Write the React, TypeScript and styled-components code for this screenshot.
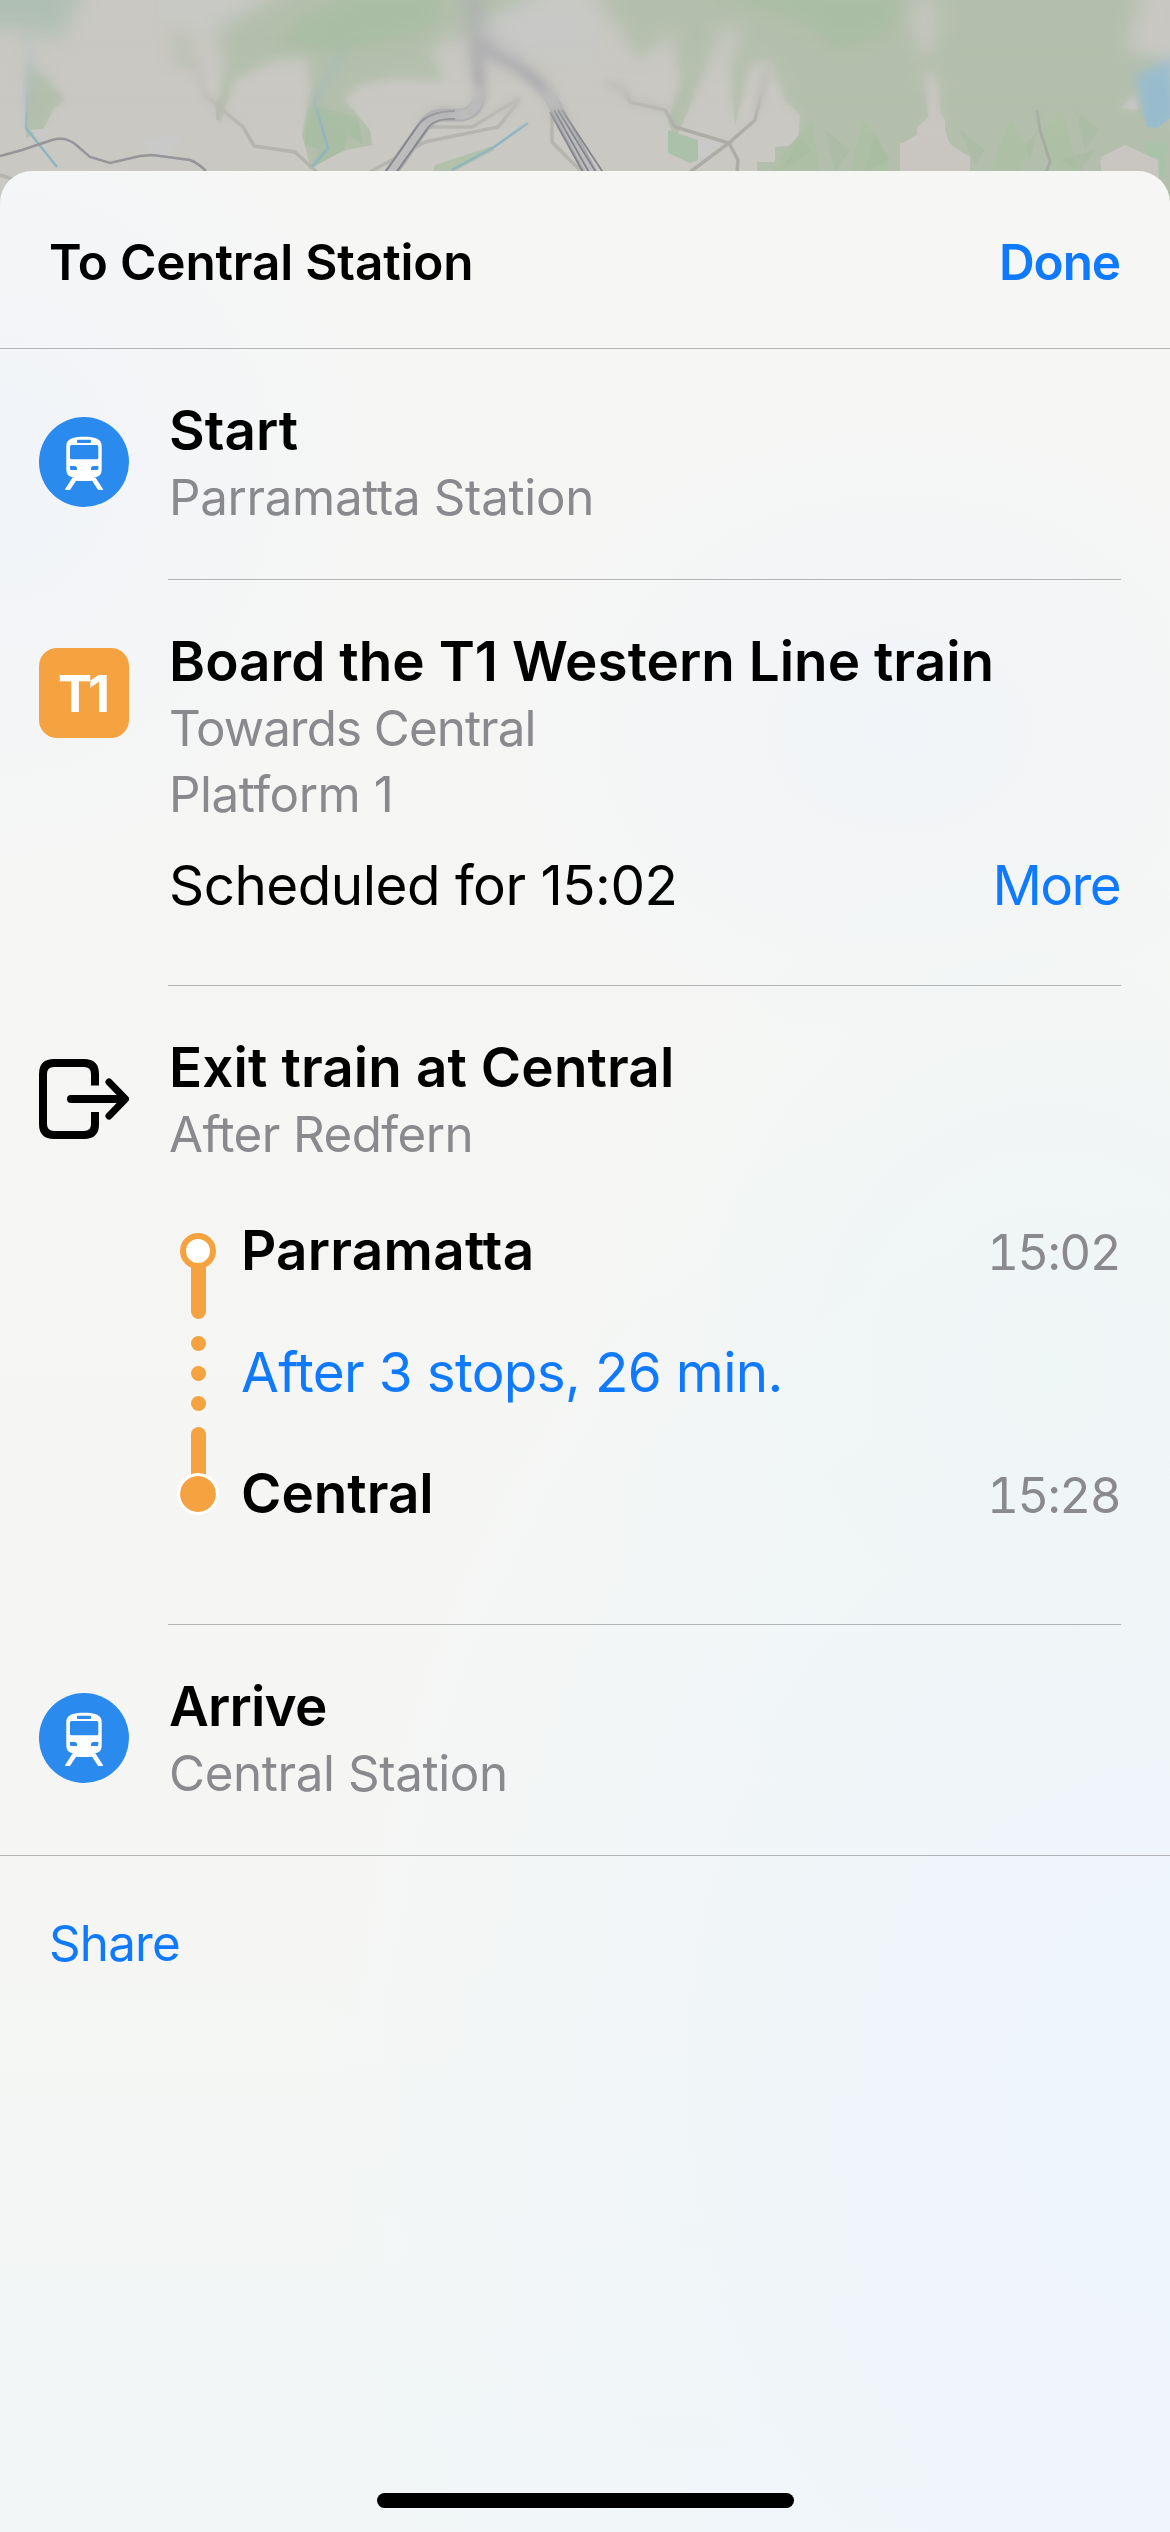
import React from "react";
import styled, { createGlobalStyle, css } from "styled-components";

const Global = createGlobalStyle`
  *, *::before, *::after { box-sizing: border-box; }
  html, body { margin: 0; padding: 0; background: #c9c8c2; }
  body { font-family: Inter, "Liberation Sans", sans-serif; color: #000; }
`;

const Screen = styled.main`
  width: 1170px;
  height: 2532px;
  overflow: hidden;
  display: flex;
  flex-direction: column;
  background: #c9c8c2;
`;

const MapStrip = styled.svg`
  display: block;
  width: 1170px;
  height: 201px;
  flex: none;
`;

const Sheet = styled.section`
  flex: 1;
  margin-top: -30px;
  position: relative;
  display: flex;
  flex-direction: column;
  border-radius: 32px 32px 0 0;
  overflow: hidden;
  background:
    radial-gradient(ellipse 380px 420px at 0px 300px, #f1f4f9 0%, rgba(241, 244, 249, 0) 100%),
    radial-gradient(ellipse 420px 330px at 900px 560px, #f1f4f8 0%, rgba(241, 244, 248, 0) 100%),
    radial-gradient(ellipse 460px 520px at 1050px 1200px, #eff6f6 0%, rgba(239, 246, 246, 0) 100%),
    radial-gradient(ellipse 850px 1050px at 1170px 1900px, #edf5fd 0%, rgba(237, 245, 253, 0) 100%),
    linear-gradient(180deg, #f6f6f5 0%, #f5f6f4 75%, #f2f6f7 100%);
`;

const textKinds = {
  nav: css`font-size: 49.5px; font-weight: 600; line-height: 66px;`,
  title: css`font-size: 54.8px; font-weight: 600; line-height: 67px;`,
  body: css`font-size: 54.8px; font-weight: 400; line-height: 66px;`,
  sub: css`font-size: 49.3px; font-weight: 400; line-height: 66px;`,
};

const Label = styled.span<{ $kind: keyof typeof textKinds; $tone?: string; $track?: number }>`
  display: block;
  margin: 0;
  white-space: nowrap;
  ${(p) => textKinds[p.$kind]}
  color: ${(p) => p.$tone ?? "#000"};
  letter-spacing: ${(p) => p.$track ?? 0}px;
`;

const Time = styled(Label)`
  font-variant-numeric: tabular-nums;
`;

const Link = styled.button<{ $kind: keyof typeof textKinds; $track?: number }>`
  appearance: none;
  border: 0;
  padding: 0;
  background: none;
  font-family: inherit;
  text-align: left;
  white-space: nowrap;
  ${(p) => textKinds[p.$kind]}
  color: #0f7afe;
  letter-spacing: ${(p) => p.$track ?? 0}px;
`;

const Header = styled.header`
  flex: none;
  height: 178px;
  padding: 5px 50px 0 49px;
  display: flex;
  align-items: center;
  justify-content: space-between;
  border-bottom: 1px solid #b2b4b6;
`;

const Step = styled.article<{ $height: number; $full?: boolean }>`
  flex: none;
  height: ${(p) => p.$height}px;
  display: grid;
  grid-template-columns: 129px 1fr;
  column-gap: 39px;
  border-bottom: ${(p) => (p.$full ? "1px solid #b2b4b6" : "0")};
`;

const IconSlot = styled.div<{ $top?: number }>`
  padding-top: ${(p) => p.$top ?? 68}px;
  padding-left: 39px;
  svg { display: block; }
`;

const StepBody = styled.div<{ $line?: boolean }>`
  margin-right: 49px;
  padding: 48px 1px 0;
  border-bottom: ${(p) => (p.$line ? "1px solid #b2b4b6" : "0")};
`;

const LineBadge = styled.div`
  width: 90px;
  height: 90px;
  border-radius: 18px;
  background: #f5a340;
  color: #fff;
  display: flex;
  align-items: center;
  justify-content: center;
  font-size: 51px;
  font-weight: 700;
  letter-spacing: -4px;
  padding-right: 4px;
`;

const Schedule = styled.div`
  margin-top: 25px;
  display: flex;
  justify-content: space-between;
`;

const Journey = styled.div`
  margin-top: 23px;
  padding-left: 8px;
  display: grid;
  grid-template-columns: 42px 1fr;
  column-gap: 22px;
`;

const Track = styled.div`
  display: flex;
  flex-direction: column;
  align-items: center;
  padding-top: 43px;
`;

const Origin = styled.i`
  width: 36px;
  height: 36px;
  border-radius: 50%;
  border: 6px solid #f5a340;
  background: #fff;
`;

const Stem = styled.i<{ $end?: boolean }>`
  width: 15px;
  height: ${(p) => (p.$end ? 49 : 53)}px;
  margin-top: ${(p) => (p.$end ? 0 : -3)}px;
  background: #f5a340;
  border-radius: ${(p) => (p.$end ? "8px 8px 0 0" : "0 0 8px 8px")};
`;

const Dots = styled.div`
  display: flex;
  flex-direction: column;
  gap: 15px;
  padding: 17px 0 16px;
`;

const Dot = styled.i`
  width: 15px;
  height: 15px;
  border-radius: 50%;
  background: #f5a340;
`;

const Destination = styled.i`
  width: 42px;
  height: 42px;
  margin-top: -3px;
  border-radius: 50%;
  border: 3px solid #fff;
  background: #f5a340;
  background-clip: padding-box;
`;

const Stops = styled.div`
  display: grid;
  grid-auto-rows: 121.5px;
  align-items: center;
`;

const Stop = styled.div`
  display: flex;
  justify-content: space-between;
  align-items: baseline;
`;

const Footer = styled.footer`
  flex: 1;
  padding: 54px 49px 0;
  display: flex;
  flex-direction: column;
  align-items: flex-start;
`;

const HomeBar = styled.div`
  width: 417px;
  height: 15px;
  margin: auto auto 24px;
  border-radius: 8px;
  background: #000;
`;

const GREY = "#8a8a8e";

function TrainIcon() {
  return (
    <svg width="90" height="90" viewBox="0 0 90 90">
      <circle cx="45" cy="45" r="45" fill="#2b8aee" />
      <path
        fill="#fff"
        fillRule="evenodd"
        d="M45 19.7c6 0 10.500.6 13.200 2.100C61.500 23.400 62.700 26 62.700 29v23.500c0 4-1.700 6.500-5.200 7.600-1.200.4-2.600.6-3.500.8-.8 2.300-1.400 3.100-3 3.100H39c-1.600 0-2.200-.8-3-3.100-.9-.2-2.300-.4-3.500-.8-3.500-1.100-5.200-3.600-5.200-7.600V29c0-3 1.200-5.600 4.500-7.200C34.500 20.300 39 19.700 45 19.700ZM39 22.700q-1 0-1 1V25q0 1 1 1h12q1 0 1-1v-1.300q0-1-1-1ZM32.500 28q-1.500 0-1.500 1.500v11.300q0 1.500 1.500 1.500h25.300q1.500 0 1.500-1.500V29.500q0-1.500-1.500-1.500ZM31 49v2.800q0 1.200 1.200 1.200H38v-1.500q0-2.500-2.500-2.500ZM59.300 49v2.800q0 1.200-1.200 1.200H52v-1.500q0-2.500 2.500-2.500Z"
      />
      <path fill="#fff" d="M33.500 60.500h5.800L31 73h-5q.2-1 .8-2ZM51 60.500h5.500l6.800 10.500q.6 1 .8 2h-5Z" />
    </svg>
  );
}

function ExitIcon() {
  return (
    <svg width="90" height="80" viewBox="0 0 90 80" fill="none" stroke="#000">
      <path strokeWidth="8" d="M56 26.500V15Q56 4 45 4H15Q4 4 4 15V65Q4 76 15 76H45Q56 76 56 65V53" />
      <path strokeWidth="8" strokeLinecap="round" d="M32 40H84" />
      <path strokeWidth="7" strokeLinecap="round" strokeLinejoin="round" d="M70 23 86.500 40 70 57" />
    </svg>
  );
}

function MapArt() {
  return (
    <g fill="none">
      <rect x="-30" y="-40" width="1230" height="280" fill="#c9c8c2" />
      <path fill="#c8c8c6" d="M160 0h120l-60 30-60-10ZM470 0h120v60h-90Z" />
      <g fill="#b3bfac">
        <path d="M-20-20H90L60 40 30 30H-20Z" fill="#b0bfb4" />
        <path d="M28 60 50 80 65 100 54 108 43 130 26 138Z" />
        <path d="M170 30 190 32 196 68 176 70Z" fill="#bcc1b2" />
        <path d="M300-20H560L470 30 430 50 445 80 400 78 360 85 345 100 370 130 372 145 347 150 310 165 302 135 310 90 306 55 270 62 235 80 220 124 218 105 224 60 215 30Z" />
        <path d="M585-20H1140V10L1125 50 1170 60V200H1110L1110 165 1125 145 1100 160 1102 175H972L965 155 945 140 945 120 935 105 925 130 900 145 900 175H757V162H775V147L798 145 800 115 785 100 770 60 750 65 735 125 730 70 740 25 722 30 695 95 675 140 668 122 680 80 672 30 640 60 620 30Z" />
      </g>
      <g fill="#a9bda4">
        <path d="M360-10H450L430 30 350 50 270 52 300 20Z" />
        <path d="M690-10H900L895 30 840 50 800 20Z" />
        <path d="M305 128 310 105 330 110 358 118 363 145 347 134 344 150 308 170 320 150 305 145Z" />
      </g>
      <g fill="#adc0a5">
        <path d="M668 130 698 140V160L690 163 668 153Z" fill="#abc1aa" />
        <path d="M790 145 812 120 820 171H772ZM850 171 862 120 880 140 890 171ZM990 171 1010 120 1030 150 1020 171ZM1042 130 1062 110 1078 171H1052Z" />
        <path d="M1145 143h22l-2 35-18-3Z" fill="#a9c2aa" />
        <path d="M433 171 435 165 465 155 492 146 494 150 470 163 455 171Z" fill="#b2c1a9" />
      </g>
      <g fill="#a4b79c" opacity=".35">
        <path d="M780 171 800 140 812 150ZM825 130 850 150 835 171ZM865 171 875 135 890 160ZM960 130 985 150 975 165ZM1025 145 1038 130 1030 160ZM1075 110 1100 130 1085 150ZM1060 160 1095 150 1080 171Z" />
      </g>
      <path fill="#c9c6c1" d="M900 171V143L917 142V128L935 110 945 130 950 145 970 157V171ZM912 0h24l-2 50-16 5ZM925 70 937 75 942 125 928 115ZM1150 0h30v45l-25-10Z" />
      <path fill="#c9c6c1" d="M1101 157 1125 145 1158 160 1160 200H1120L1101 171Z" />
      <path fill="#c9c9ca" d="M140 140 183 135 160 165ZM698 140 722 142 700 160ZM30 130 50 128 42 140ZM1120 108 1135 95 1138 110Z" />
      <path fill="#98bccd" d="M1135 75 1150 70 1175 55V115L1157 128 1147 127Z" />
      <g stroke="#b5b4ae" strokeWidth="3.500">
        <path d="M195 60 205 95 243 127 254 146 295 152 320 175M217 100 218 120" />
        <path d="M370 172 425 142 498 127 520 100M420 127H472L520 98M552 85V142L585 175" />
        <path d="M605 82 625 90 630 102 665 110 675 127 729 143 690 172M767 70 755 120 729 143 738 160 737 172" stroke="#adaca8" />
        <path d="M1037 110 1040 130 1050 162 1046 172" stroke="#a5aca1" strokeWidth="3" />
        <path d="M0 175 15 180" />
      </g>
      <g stroke="#8fb5c2" strokeWidth="2.500">
        <path d="M30 30 26 128 57 167M345 50 330 75 314 100 328 148 312 167M452 170 494 147 528 123" />
      </g>
      <path stroke="#95959a" strokeWidth="2.500" d="M0 156 22 150 52 140Q65 136 75 144L90 157 110 163 140 156 152 155 190 160Q198 163 206 171" />
      <g stroke="#a9a9ad" strokeWidth="13" strokeLinejoin="round">
        <path d="M474-10 475 35 480 90Q480 112 462 115H441Q430 116 423 127L390 174M475 35Q485 50 510 62 548 85 558 112L592 175" />
      </g>
      <g stroke="#c4c4c3" strokeWidth="9" strokeLinejoin="round">
        <path d="M479 85Q480 112 462 115H441Q430 116 423 127L390 174M545 88 558 112 592 175" strokeOpacity=".7" />
      </g>
      <g stroke="#85868d" strokeWidth="1.800">
        <path d="M455 111Q430 111 419 124L384 174M455 119Q434 118 427 129L395 174" />
        <path d="M550 112 584 174M554 110 590 174M558 110 597 174M562 110 604 174" />
      </g>
    </g>
  );
}

export default function App() {
  return (
    <Screen>
      <Global />
      <MapStrip viewBox="0 0 1170 201" aria-hidden="true">
        <defs>
          <filter id="far" x="-5%" y="-30%" width="110%" height="160%"><feGaussianBlur stdDeviation="10" /></filter>
          <filter id="mid" x="-5%" y="-30%" width="110%" height="160%"><feGaussianBlur stdDeviation="4" /></filter>
          <linearGradient id="fadeMid" x1="0" y1="35" x2="0" y2="95" gradientUnits="userSpaceOnUse">
            <stop offset="0" stopColor="#000" /><stop offset="1" stopColor="#fff" />
          </linearGradient>
          <linearGradient id="fadeNear" x1="0" y1="92" x2="0" y2="132" gradientUnits="userSpaceOnUse">
            <stop offset="0" stopColor="#000" /><stop offset="1" stopColor="#fff" />
          </linearGradient>
          <mask id="maskMid" maskUnits="userSpaceOnUse" x="0" y="0" width="1170" height="201"><rect width="1170" height="201" fill="url(#fadeMid)" /></mask>
          <mask id="maskNear" maskUnits="userSpaceOnUse" x="0" y="0" width="1170" height="201"><rect width="1170" height="201" fill="url(#fadeNear)" /></mask>
        </defs>
        <g filter="url(#far)"><MapArt /></g>
        <g mask="url(#maskMid)"><g filter="url(#mid)"><MapArt /></g></g>
        <g mask="url(#maskNear)"><MapArt /></g>
      </MapStrip>

      <Sheet>
        <Header>
          <Label as="h1" $kind="nav" $track={-0.15}>To Central Station</Label>
          <Link $kind="nav" $track={-1.1}>Done</Link>
        </Header>

        <Step $height={231}>
          <IconSlot><TrainIcon /></IconSlot>
          <StepBody $line>
            <Label $kind="title" $track={0.1}>Start</Label>
            <Label $kind="sub" $tone={GREY} $track={-0.33}>Parramatta Station</Label>
          </StepBody>
        </Step>

        <Step $height={406}>
          <IconSlot><LineBadge>T1</LineBadge></IconSlot>
          <StepBody $line>
            <Label $kind="title" $track={0.04}>Board the T1 Western Line train</Label>
            <Label $kind="sub" $tone={GREY} $track={-0.95}>Towards Central</Label>
            <Label $kind="sub" $tone={GREY} $track={-0.45}>Platform 1</Label>
            <Schedule>
              <Label $kind="body" $track={-0.5}>Scheduled for 15:02</Label>
              <Link $kind="body" $track={-1.6}>More</Link>
            </Schedule>
          </StepBody>
        </Step>

        <Step $height={639}>
          <IconSlot $top={73}><ExitIcon /></IconSlot>
          <StepBody $line>
            <Label $kind="title" $track={0.12}>Exit train at Central</Label>
            <Label $kind="sub" $tone={GREY} $track={-0.55}>After Redfern</Label>
            <Journey>
              <Track>
                <Origin />
                <Stem />
                <Dots><Dot /><Dot /><Dot /></Dots>
                <Stem $end />
                <Destination />
              </Track>
              <Stops>
                <Stop>
                  <Label $kind="title" $track={0.25}>Parramatta</Label>
                  <Time $kind="sub" $tone={GREY} $track={-1.6}>15:02</Time>
                </Stop>
                <Stop><Link $kind="body" $track={-0.65}>After 3 stops, 26 min.</Link></Stop>
                <Stop>
                  <Label $kind="title">Central</Label>
                  <Time $kind="sub" $tone={GREY} $track={-1.6}>15:28</Time>
                </Stop>
              </Stops>
            </Journey>
          </StepBody>
        </Step>

        <Step $height={231} $full>
          <IconSlot><TrainIcon /></IconSlot>
          <StepBody>
            <Label $kind="title" $track={-0.8}>Arrive</Label>
            <Label $kind="sub" $tone={GREY} $track={-0.38}>Central Station</Label>
          </StepBody>
        </Step>

        <Footer>
          <Link $kind="sub" $track={-0.8}>Share</Link>
          <HomeBar />
        </Footer>
      </Sheet>
    </Screen>
  );
}
